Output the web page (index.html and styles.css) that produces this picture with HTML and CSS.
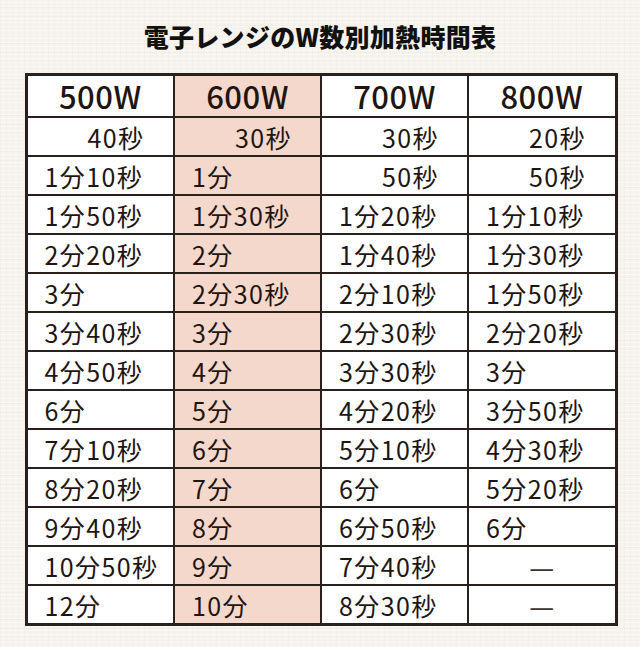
FILE: index.html
```html
<!DOCTYPE html>
<html lang="ja">
<head>
<meta charset="utf-8">
<title>電子レンジのW数別加熱時間表</title>
<link rel="stylesheet" href="styles.css">
</head>
<body>
<main class="page">
  <h1 class="title">電子レンジのW数別加熱時間表</h1>
  <table class="chart">
    <colgroup>
      <col class="c1"><col class="c2 hl"><col class="c3"><col class="c4">
    </colgroup>
    <thead>
      <tr><th>500W</th><th class="hl">600W</th><th>700W</th><th>800W</th></tr>
    </thead>
    <tbody>
      <tr><td class="in">40秒</td><td class="hl in">30秒</td><td class="in">30秒</td><td class="in">20秒</td></tr>
      <tr><td>1分10秒</td><td class="hl">1分</td><td class="in">50秒</td><td class="in">50秒</td></tr>
      <tr><td>1分50秒</td><td class="hl">1分30秒</td><td>1分20秒</td><td>1分10秒</td></tr>
      <tr><td>2分20秒</td><td class="hl">2分</td><td>1分40秒</td><td>1分30秒</td></tr>
      <tr><td>3分</td><td class="hl">2分30秒</td><td>2分10秒</td><td>1分50秒</td></tr>
      <tr><td>3分40秒</td><td class="hl">3分</td><td>2分30秒</td><td>2分20秒</td></tr>
      <tr><td>4分50秒</td><td class="hl">4分</td><td>3分30秒</td><td>3分</td></tr>
      <tr><td>6分</td><td class="hl">5分</td><td>4分20秒</td><td>3分50秒</td></tr>
      <tr><td>7分10秒</td><td class="hl">6分</td><td>5分10秒</td><td>4分30秒</td></tr>
      <tr><td>8分20秒</td><td class="hl">7分</td><td>6分</td><td>5分20秒</td></tr>
      <tr><td>9分40秒</td><td class="hl">8分</td><td>6分50秒</td><td>6分</td></tr>
      <tr><td>10分50秒</td><td class="hl">9分</td><td>7分40秒</td><td class="na">—</td></tr>
      <tr><td>12分</td><td class="hl">10分</td><td>8分30秒</td><td class="na">—</td></tr>
    </tbody>
  </table>
</main>
</body>
</html>
```
FILE: styles.css
```css
html, body {
  margin: 0;
  padding: 0;
}
body {
  width: 640px;
  height: 647px;
  overflow: hidden;
  background-color: #f6f3ec;
  background-image:
    repeating-linear-gradient(0deg, rgba(255,255,255,0.4) 0 1px, transparent 1px 4px),
    repeating-linear-gradient(90deg, rgba(220,212,196,0.12) 0 1px, transparent 1px 6px),
    repeating-linear-gradient(0deg, rgba(220,212,196,0.12) 0 1px, transparent 1px 9px);
  font-family: "Noto Sans CJK JP", "Noto Sans", sans-serif;
  color: #1f1512;
}
.page {
  display: flex;
  flex-direction: column;
  align-items: center;
  padding-top: 21px;
}
.title {
  margin: 0;
  height: 52px;
  font-size: 25px;
  line-height: 30px;
  font-weight: 900;
  letter-spacing: 0.3px;
  color: #111;
}
.chart {
  width: 590px;
  margin-left: 2px;
  border-collapse: collapse;
  table-layout: fixed;
  border: 3px solid #2a211d;
  background: #fff;
}
.c1, .c4 { width: 148px; }
.c2, .c3 { width: 147px; }
.chart th, .chart td {
  border: 2px solid #2a211d;
  padding: 0 0 0 17px;
  text-align: left;
  font-weight: 400;
  vertical-align: middle;
}
.chart th {
  height: 40px;
  padding: 0;
  text-align: center;
  font-size: 31px;
  line-height: 34px;
  font-weight: 500;
  letter-spacing: 0.5px;
}
.chart td {
  height: 37px;
  font-size: 25px;
  letter-spacing: 1.4px;
  line-height: 30px;
}
.chart .hl {
  background: #f4d8cb;
}
.chart td.in {
  padding-left: 60px;
}
.chart td.na {
  padding: 0;
  text-align: center;
  letter-spacing: 0;
  font-size: 28px;
  color: #3a3330;
}
```
